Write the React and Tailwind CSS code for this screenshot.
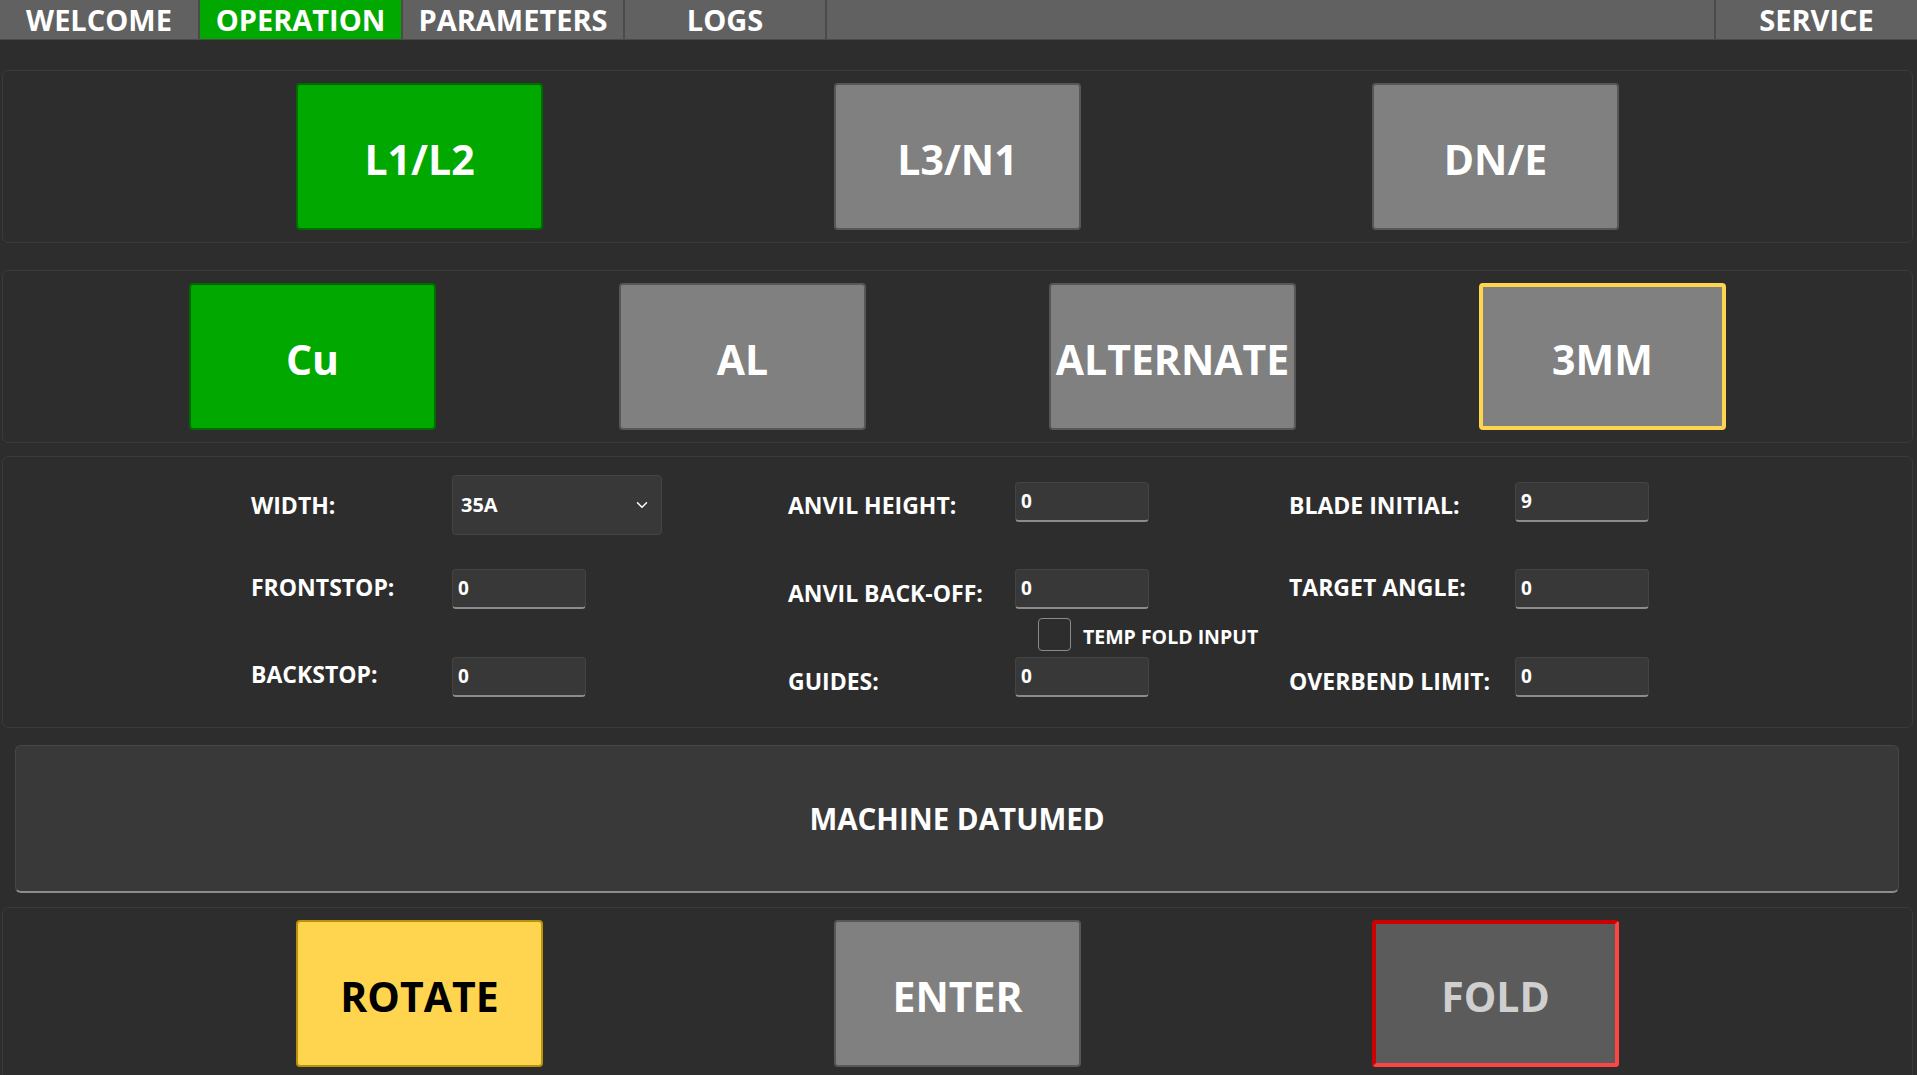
import React from 'react';
import { ChevronDown } from 'lucide-react';

const tabs = [
  { name: 'WELCOME', w: 'w-[200px]' },
  { name: 'OPERATION', w: 'w-[203px]', active: true },
  { name: 'PARAMETERS', w: 'w-[222px]' },
  { name: 'LOGS', w: 'w-[202px]' },
];

function BigButton({ label, variant = 'gray' }) {
  const styles = {
    green: 'bg-[#00a800] border-2 border-[#006c00] text-white',
    gray: 'bg-[#808080] border-2 border-[#575757] text-white',
    selected: 'bg-[#808080] border-[4px] border-[#ffd54f] text-white',
    yellow: 'bg-[#ffd54f] border-2 border-[#b8920b] text-black',
    fold: 'bg-[#5b5b5b] border-[4px] border-t-[#cc0000] border-l-[#cc0000] border-r-[#ff4444] border-b-[#ff4444] text-[#cfcfcf]',
  };
  return (
    <button
      className={`w-[247px] h-[147px] rounded-[4px] flex items-center justify-center pt-[5px] text-[41px] font-bold leading-none ${styles[variant]}`}
    >
      {label}
    </button>
  );
}

function Panel({ children, className = '' }) {
  return (
    <div className={`ml-[2px] mr-[4px] rounded-[6px] border border-[#3a3a3a] ${className}`}>
      {children}
    </div>
  );
}

function NumInput({ value }) {
  return (
    <div className="w-[134px] h-[40px] rounded-[4px] bg-[#383838] border border-[#444444] border-b-2 border-b-[#8c8c8c] flex items-center pl-[5px] text-[19px] font-bold text-white">
      {value}
    </div>
  );
}

function Field({ label, value, labelW, shift = '' }) {
  return (
    <div className="flex items-center h-[40px]">
      <div className={`${labelW} text-[23px] font-bold text-white whitespace-nowrap ${shift}`}>{label}</div>
      <NumInput value={value} />
    </div>
  );
}

export default function App() {
  return (
    <div className="h-screen w-full overflow-hidden bg-[#2d2d2d] flex flex-col font-['Open_Sans','Noto_Sans',sans-serif]">
      {/* Tab bar */}
      <div className="h-[40px] shrink-0 flex bg-[#616161] border-b border-[#4a4a4a]">
        {tabs.map((t) => (
          <div
            key={t.name}
            className={`${t.w} h-full flex items-center justify-center border-r-2 border-[#4b4b4b] text-[29px] font-bold text-white leading-none ${
              t.active ? 'bg-[#00a800]' : ''
            }`}
          >
            {t.name}
          </div>
        ))}
        <div className="flex-1 border-r-2 border-[#4b4b4b]" />
        <div className="w-[201px] h-full flex items-center justify-center text-[29px] font-bold text-white leading-none">
          SERVICE
        </div>
      </div>

      {/* Phase selection */}
      <Panel className="mt-[30px] h-[173px] shrink-0 flex items-center justify-center gap-[291px]">
        <BigButton label="L1/L2" variant="green" />
        <BigButton label="L3/N1" />
        <BigButton label="DN/E" />
      </Panel>

      {/* Material selection */}
      <Panel className="mt-[27px] h-[173px] shrink-0 flex items-center justify-center gap-[183px]">
        <BigButton label="Cu" variant="green" />
        <BigButton label="AL" />
        <BigButton label="ALTERNATE" />
        <BigButton label="3MM" variant="selected" />
      </Panel>

      {/* Parameters */}
      <Panel className="mt-[13px] h-[272px] shrink-0 flex pl-[248px]">
        {/* column 1 */}
        <div className="w-[537px] flex flex-col pt-[18px]">
          <div className="flex items-center h-[60px]">
            <div className="w-[201px] text-[23px] font-bold text-white">WIDTH:</div>
            <div className="w-[210px] h-[60px] rounded-[4px] bg-[#383838] border border-[#444444] flex items-center justify-between pl-[8px] pr-[10px] text-[20px] font-bold text-white">
              <span>35A</span>
              <ChevronDown size={18} strokeWidth={2} className="text-white" />
            </div>
          </div>
          <div className="mt-[34px]">
            <Field label="FRONTSTOP:" value="0" labelW="w-[201px]" shift="-mt-[4px]" />
          </div>
          <div className="mt-[48px]">
            <Field label="BACKSTOP:" value="0" labelW="w-[201px]" shift="-mt-[6px]" />
          </div>
        </div>

        {/* column 2 */}
        <div className="w-[501px] flex flex-col pt-[25px]">
          <Field label="ANVIL HEIGHT:" value="0" labelW="w-[227px]" shift="mt-[6px]" />
          <div className="mt-[47px]">
            <Field label="ANVIL BACK-OFF:" value="0" labelW="w-[227px]" shift="mt-[8px]" />
          </div>
          <div className="mt-[9px] h-[33px] flex items-center pl-[250px] gap-[12px]">
            <div className="w-[33px] h-[33px] rounded-[4px] border border-[#8a8a8a] bg-[#2d2d2d]" />
            <span className="text-[19.5px] font-bold text-white whitespace-nowrap mt-[4px]">TEMP FOLD INPUT</span>
          </div>
          <div className="mt-[6px]">
            <Field label="GUIDES:" value="0" labelW="w-[227px]" shift="mt-[8px]" />
          </div>
        </div>

        {/* column 3 */}
        <div className="flex-1 flex flex-col pt-[25px]">
          <Field label="BLADE INITIAL:" value="9" labelW="w-[226px]" shift="mt-[6px]" />
          <div className="mt-[47px]">
            <Field label="TARGET ANGLE:" value="0" labelW="w-[226px]" shift="-mt-[4px]" />
          </div>
          <div className="mt-[48px]">
            <Field label="OVERBEND LIMIT:" value="0" labelW="w-[226px]" shift="mt-[8px]" />
          </div>
        </div>
      </Panel>

      {/* Status */}
      <div className="mt-[17px] ml-[15px] mr-[18px] h-[148px] shrink-0 rounded-[6px] bg-[#393939] border border-[#474747] border-b-2 border-b-[#8c8c8c] flex items-center justify-center text-[29.5px] font-bold text-white">
        <span className="mt-[2px]">MACHINE DATUMED</span>
      </div>

      {/* Actions */}
      <Panel className="mt-[14px] h-[173px] shrink-0 flex items-center justify-center gap-[291px]">
        <BigButton label="ROTATE" variant="yellow" />
        <BigButton label="ENTER" />
        <BigButton label="FOLD" variant="fold" />
      </Panel>
    </div>
  );
}
